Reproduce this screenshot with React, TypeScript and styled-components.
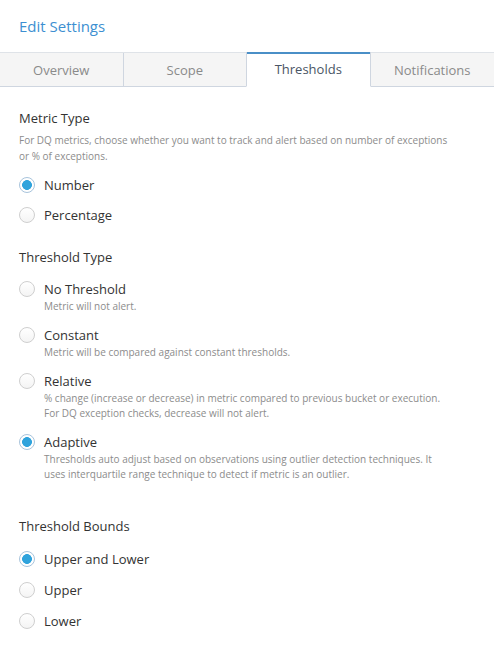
import styled, { createGlobalStyle } from "styled-components";

const GlobalStyle = createGlobalStyle`
  * { box-sizing: border-box; }
  body {
    margin: 0;
    background: #ffffff;
    font-family: "Open Sans", "Liberation Sans", sans-serif;
  }
`;

const tabs = ["Overview", "Scope", "Thresholds", "Notifications"];

interface Choice {
  label: string;
  hint?: string[];
  checked?: boolean;
}

const metricTypes: Choice[] = [
  { label: "Number", checked: true },
  { label: "Percentage" },
];

const thresholdTypes: Choice[] = [
  { label: "No Threshold", hint: ["Metric will not alert."] },
  { label: "Constant", hint: ["Metric will be compared against constant thresholds."] },
  {
    label: "Relative",
    hint: [
      "% change (increase or decrease) in metric compared to previous bucket or execution.",
      "For DQ exception checks, decrease will not alert.",
    ],
  },
  {
    label: "Adaptive",
    checked: true,
    hint: [
      "Thresholds auto adjust based on observations using outlier detection techniques. It",
      "uses interquartile range technique to detect if metric is an outlier.",
    ],
  },
];

const bounds: Choice[] = [
  { label: "Upper and Lower", checked: true },
  { label: "Upper" },
  { label: "Lower" },
];

function Options(props: { items: Choice[]; top: number; gap: number }) {
  const { items, top, gap } = props;
  return (
    <OptionList $top={top} $gap={gap}>
      {items.map((item) => (
        <Option key={item.label}>
          <Radio $checked={item.checked} />
          <OptionText>
            <OptionLabel>{item.label}</OptionLabel>
            {item.hint && (
              <Hint>
                {item.hint.map((line) => (
                  <div key={line}>{line}</div>
                ))}
              </Hint>
            )}
          </OptionText>
        </Option>
      ))}
    </OptionList>
  );
}

function App() {
  return (
    <Page>
      <GlobalStyle />
      <Title>Edit Settings</Title>
      <TabBar>
        {tabs.map((tab) => (
          <Tab key={tab} $active={tab === "Thresholds"}>
            {tab}
          </Tab>
        ))}
      </TabBar>
      <Content>
        <Section>
          <Heading>Metric Type</Heading>
          <Description>
            For DQ metrics, choose whether you want to track and alert based on number of exceptions
            <br />
            or % of exceptions.
          </Description>
          <Options items={metricTypes} top={12} gap={12} />
        </Section>
        <Section $top={24}>
          <Heading>Threshold Type</Heading>
          <Options items={thresholdTypes} top={14} gap={12} />
        </Section>
        <Section $top={35}>
          <Heading>Threshold Bounds</Heading>
          <Options items={bounds} top={15} gap={13} />
        </Section>
      </Content>
    </Page>
  );
}

export default App;

const Page = styled.div`
  width: 494px;
  min-height: 647px;
  background: #ffffff;
`;

const Title = styled.h1`
  margin: 0;
  padding: 15px 19px 0;
  height: 52px;
  font-size: 15px;
  font-weight: 400;
  line-height: 22px;
  color: #3d8fd1;
`;

const TabBar = styled.div`
  display: grid;
  grid-template-columns: repeat(4, 1fr);
  border-top: 1px solid #dfe3e8;
`;

const Tab = styled.div<{ $active?: boolean }>`
  display: flex;
  align-items: center;
  justify-content: center;
  font-size: 13px;
  color: ${(p) => (p.$active ? "#4a5565" : "#8a8a8a")};
  background: ${(p) => (p.$active ? "#ffffff" : "#f5f5f5")};
  border-bottom: 1px solid ${(p) => (p.$active ? "transparent" : "#cfd6e0")};
  border-right: 1px solid #cfd6e0;
  border-left: ${(p) => (p.$active ? "1px solid #cfd6e0" : "none")};
  box-shadow: ${(p) => (p.$active ? "inset 0 2px 0 #4a8fc7" : "none")};
  margin-top: ${(p) => (p.$active ? "-1px" : "0")};
  margin-left: ${(p) => (p.$active ? "-1px" : "0")};
  height: ${(p) => (p.$active ? "35px" : "34px")};

  &:last-child {
    border-right: none;
  }
`;

const Content = styled.div`
  padding: 22px 19px 20px;
  display: flex;
  flex-direction: column;
`;

const Section = styled.div<{ $top?: number }>`
  display: flex;
  flex-direction: column;
  margin-top: ${(p) => p.$top ?? 0}px;
`;

const Heading = styled.div`
  font-size: 13px;
  line-height: 18px;
  color: #333333;
`;

const Description = styled.div`
  margin-top: 5px;
  font-size: 10px;
  line-height: 16px;
  color: #8c8c8c;
`;

const OptionList = styled.div<{ $top: number; $gap: number }>`
  display: flex;
  flex-direction: column;
  gap: ${(p) => p.$gap}px;
  margin-top: ${(p) => p.$top}px;
`;

const Option = styled.div`
  display: flex;
  align-items: flex-start;
  gap: 9px;
`;

const Radio = styled.span<{ $checked?: boolean }>`
  flex: none;
  width: 16px;
  height: 16px;
  margin-top: 1px;
  border-radius: 50%;
  border: 1px solid ${(p) => (p.$checked ? "#a8c4dc" : "#cfcfcf")};
  background: ${(p) =>
    p.$checked
      ? "radial-gradient(circle, #2fa3dc 0 4.6px, #ffffff 5.2px)"
      : "linear-gradient(#ffffff, #f4f4f4)"};
`;

const OptionText = styled.div`
  display: flex;
  flex-direction: column;
`;

const OptionLabel = styled.div`
  font-size: 13px;
  line-height: 18px;
  color: #333333;
`;

const Hint = styled.div`
  font-size: 10px;
  line-height: 15px;
  color: #8c8c8c;
  margin-top: 1px;
`;
